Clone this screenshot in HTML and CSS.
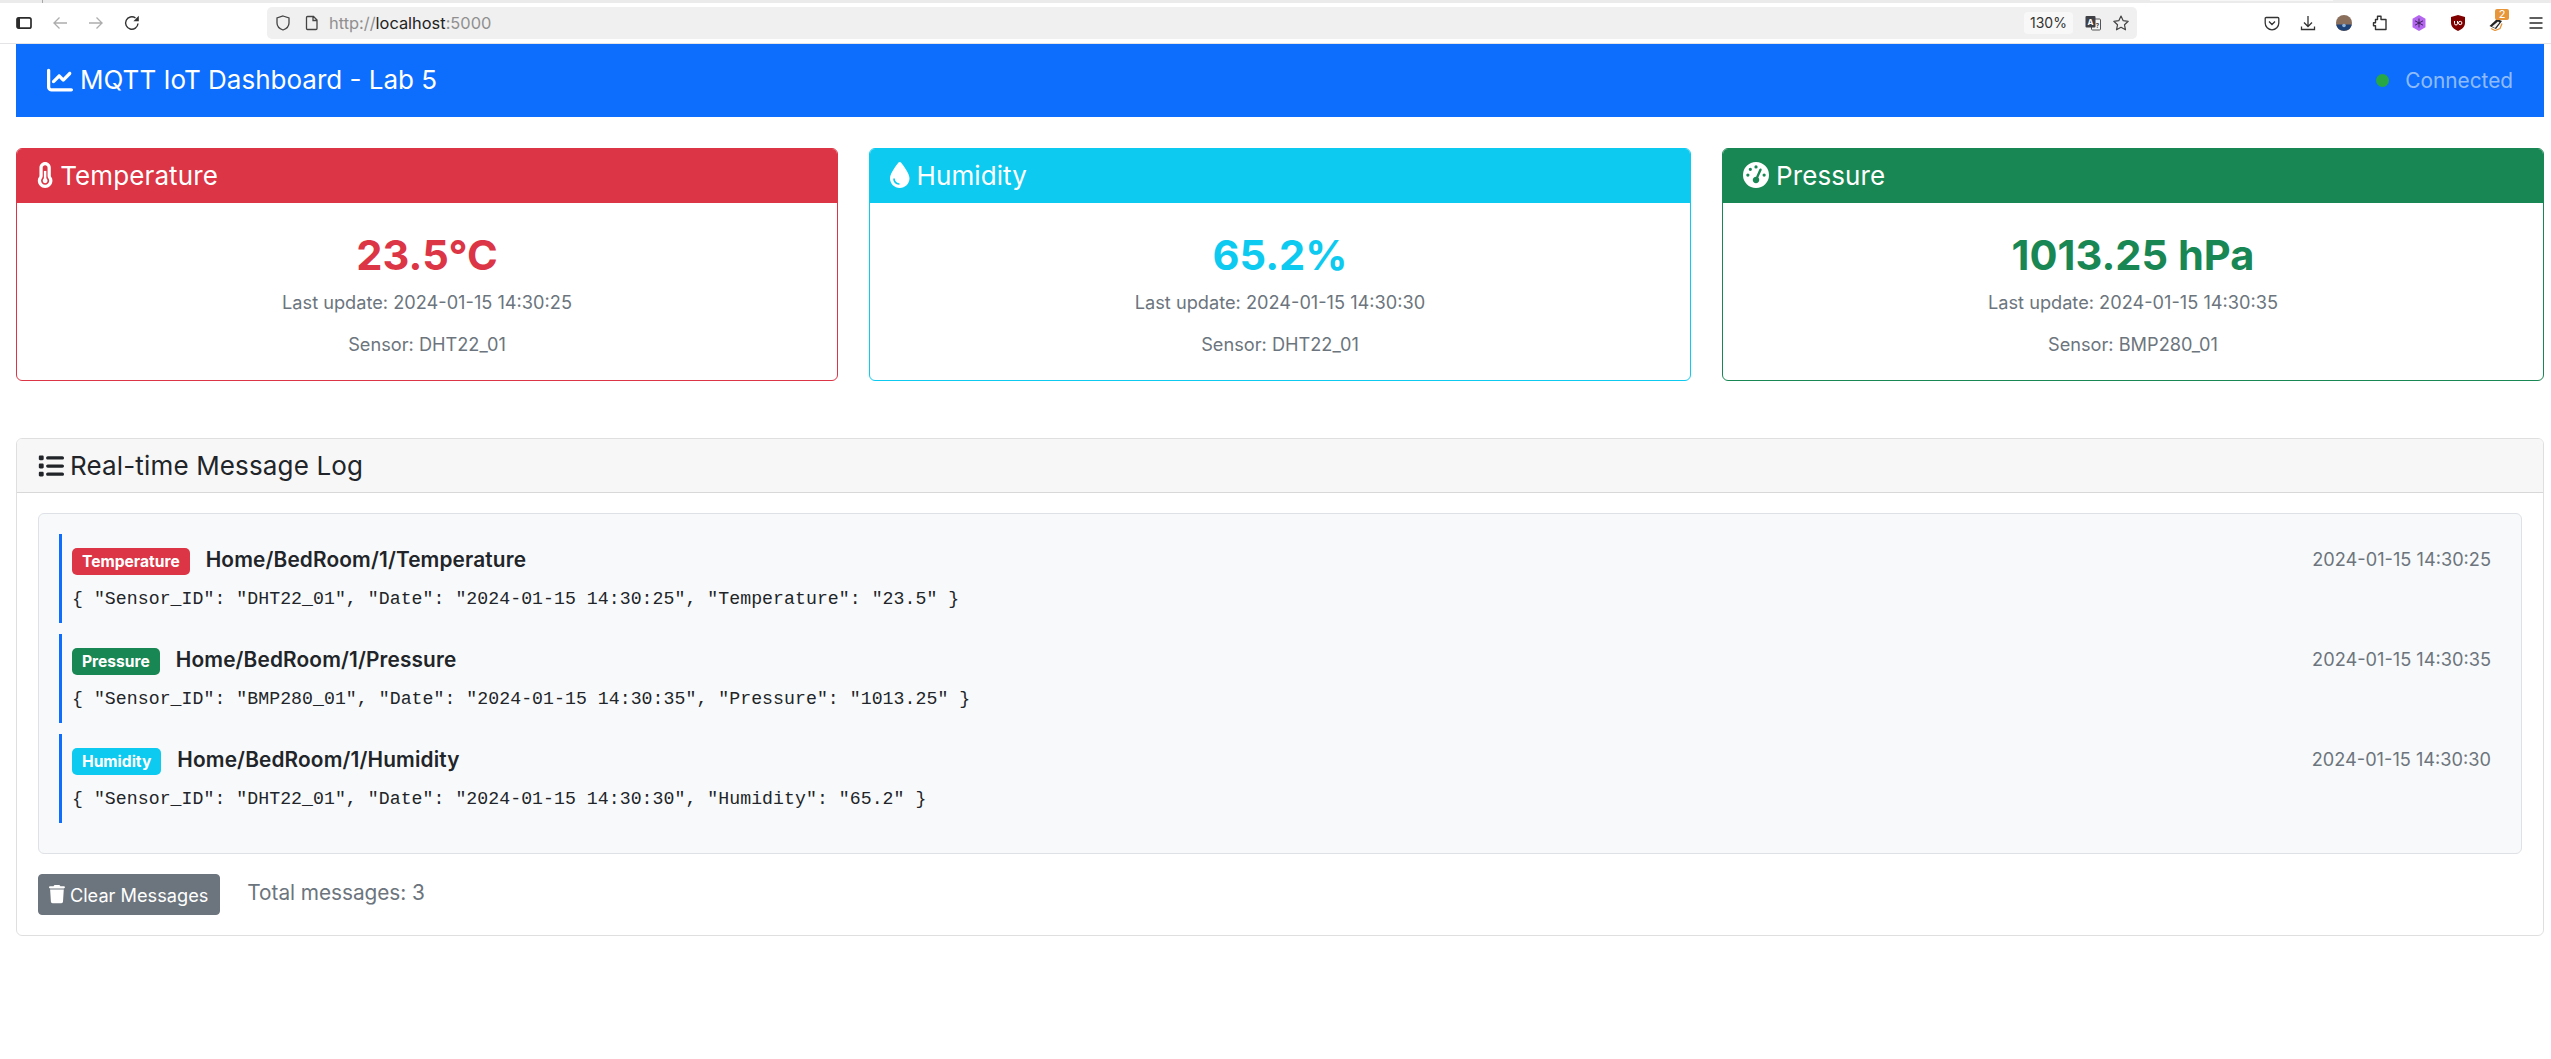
FILE: index.html
```html
<!DOCTYPE html>
<html lang="en">
<head>
<meta charset="UTF-8"/>
<title>MQTT IoT Dashboard</title>
<link rel="stylesheet" href="styles.css">
</head>
<body>
  <div class="tabstrip"><span class="tab-sep"></span><span class="tab-shadow"></span></div>
  <div class="toolbar">
    <div class="tb-left">
      <svg class="tb-icon" viewBox="0 0 16 16"><rect x="1" y="2.800" width="14" height="10.400" rx="1.800" fill="none" stroke="#2b2b2b" stroke-width="1.700"/><rect x="1" y="2.800" width="3" height="10.400" fill="#2b2b2b"/></svg>
      <svg class="tb-icon" viewBox="0 0 16 16"><path d="M15 8H1.500M7.500 2.500L2 8l5.500 5.500" fill="none" stroke="#adadad" stroke-width="1.300"/></svg>
      <svg class="tb-icon" viewBox="0 0 16 16"><path d="M1 8h13.500M8.500 2.500L14 8l-5.500 5.500" fill="none" stroke="#adadad" stroke-width="1.300"/></svg>
      <svg class="tb-icon" viewBox="0 0 16 16"><path d="M14 8.500A6.200 6.200 0 1 1 11.500 3" fill="none" stroke="#333" stroke-width="1.400"/><path d="M14.800 .8v5.400H9.400z" fill="#333"/></svg>
    </div>
    <div class="urlbar">
      <svg class="url-icon shield" viewBox="0 0 16 16"><path d="M8 1l6 2v5c0 3.500-2.700 5.800-6 7-3.300-1.200-6-3.500-6-7V3z" fill="none" stroke="#444" stroke-width="1.300"/></svg>
      <svg class="url-icon" viewBox="0 0 16 16"><path d="M3.500 1.500h6l3.500 3.500v8.500a1 1 0 0 1-1 1H3.500a1 1 0 0 1-1-1v-11a1 1 0 0 1 1-1zM9 1.500V5.500h4" fill="none" stroke="#444" stroke-width="1.300"/></svg>
      <span class="url-text">http://<b>localhost</b>:5000</span>
      <span class="url-zoom">130%</span>
      <svg class="url-icon" viewBox="0 0 16 16"><rect x="6.500" y="4" width="9" height="11" rx="1" fill="#f6f6f6" stroke="#555"/><rect x=".5" y="1" width="10" height="11.500" rx="1" fill="#3f3f46"/><text class="tr-a" x="5.500" y="9.500">A</text><text class="tr-q" x="12.500" y="12.500">?</text></svg>
      <svg class="url-icon" viewBox="0 0 16 16"><path d="M8 1l2.200 4.700 5 .6-3.700 3.500 1 5L8 12.300l-4.500 2.500 1-5L.8 6.300l5-.6z" fill="none" stroke="#444" stroke-width="1.200" stroke-linejoin="round"/></svg>
    </div>
    <div class="tb-right">
      <svg class="tb-icon" viewBox="0 0 16 16"><path d="M2.200 2.500h11.600a1 1 0 0 1 1 1V8a6.800 6.800 0 0 1-13.600 0V3.500a1 1 0 0 1 1-1zM5 6.500l3 3 3-3" fill="none" stroke="#333" stroke-width="1.300"/></svg>
      <svg class="tb-icon" viewBox="0 0 16 16"><path d="M8 1v10M4 7.500l4 4 4-4M1.500 11.500v3h13v-3" fill="none" stroke="#333" stroke-width="1.300"/></svg>
      <svg class="tb-icon" viewBox="0 0 16 16"><circle cx="8" cy="8" r="8" fill="#8a6f5c"/><path d="M.2 9.500h15.600A8 8 0 0 1 .2 9.500z" fill="#1d4378"/><circle cx="8" cy="10.500" r="1.800" fill="#8fb3d9"/></svg>
      <svg class="tb-icon" viewBox="0 0 16 16"><path d="M5.500 1.200h3.500v3.300h5v10H3.500v-3.800H1.500V7.800h2V4.500h2z" fill="none" stroke="#333" stroke-width="1.400" stroke-linejoin="round"/></svg>
      <svg class="tb-icon tb-wide" viewBox="0 0 16 16"><path d="M8 0l6.500 3.800v8.400L8 16l-6.500-3.800V3.800z" fill="#b566f0"/><path d="M8 3.500v9M4 5.800l8 4.400M12 5.800l-8 4.400" stroke="#3c2458" stroke-width="1"/></svg>
      <svg class="tb-icon tb-wide" viewBox="0 0 16 16"><path d="M8 0l7 2v6c0 3.500-3 6.500-7 8-4-1.500-7-4.500-7-8V2z" fill="#800000"/><path d="M4.500 6v2.500a1.500 1.500 0 0 0 3 0V6M8.500 8a1.700 1.700 0 1 0 3.400 0 1.700 1.700 0 1 0-3.400 0" fill="none" stroke="#fff" stroke-width="1"/></svg>
      <span class="ext-badge tb-wide">
        <svg class="tb-icon" viewBox="0 0 16 16"><path d="M.5 11L8 4l5 2-6 8z" fill="#222"/><path d="M3 11.500l6-5 1.500 1-4.500 5.500z" fill="#f2f2f2"/><path d="M2 13.500l4 2 5-2 2-5" fill="none" stroke="#e8963a" stroke-width="1.300"/></svg>
        <span class="ext-count">2</span>
      </span>
      <svg class="tb-icon tb-wide" viewBox="0 0 16 16"><path d="M1.500 3h13M1.500 8h13M1.500 13h13" stroke="#2b2b2b" stroke-width="1.400"/></svg>
    </div>
  </div>

  <div class="page">
    <nav class="navbar">
      <span class="brand">
        <svg class="ico" viewBox="0 0 512 512"><path d="M64 64c0-17.700-14.300-32-32-32S0 46.300 0 64V400c0 44.200 35.800 80 80 80H480c17.700 0 32-14.300 32-32s-14.300-32-32-32H80c-8.800 0-16-7.200-16-16V64zm406.600 86.600c12.500-12.500 12.500-32.800 0-45.300s-32.800-12.500-45.300 0L320 210.700l-57.400-57.400c-12.500-12.500-32.800-12.500-45.300 0l-112 112c-12.500 12.500-12.500 32.800 0 45.300s32.800 12.500 45.300 0L240 221.300l57.400 57.400c12.500 12.500 32.800 12.500 45.300 0l128-128z"/></svg>
        MQTT IoT Dashboard - Lab 5
      </span>
      <span class="status"><span class="dot"></span>Connected</span>
    </nav>

    <div class="sensors">
      <div class="card sensor temp">
        <div class="card-head">
          <svg class="ico" viewBox="0 0 320 512"><path fill-rule="evenodd" d="M160 0c-62 0-112 50-112 112v164c0 8-3 14-8 20-15 19-24 43-24 68 0 82 66 148 144 148s144-66 144-148c0-25-9-49-24-68-5-6-8-12-8-20V112C272 50 222 0 160 0zm0 64c27 0 48 21 48 48v165c0 17 7 32 15 42 11 14 17 31 17 49 0 44-36 80-80 80s-80-36-80-80c0-18 6-35 17-49 8-10 15-25 15-42V112c0-27 21-48 48-48z"/><circle cx="160" cy="368" r="48"/><rect x="136" y="176" width="48" height="180"/></svg>
          Temperature
        </div>
        <div class="card-body">
          <div class="value">23.5°C</div>
          <p class="meta">Last update: 2024-01-15 14:30:25</p>
          <p class="meta">Sensor: DHT22_01</p>
        </div>
      </div>
      <div class="card sensor hum">
        <div class="card-head">
          <svg class="ico" viewBox="0 0 384 512"><path d="M192 512C86 512 0 426 0 320C0 228.800 130.200 57.700 166.600 11.700C172.600 4.200 181.500 0 191.100 0h1.800c9.600 0 18.500 4.200 24.500 11.700C253.800 57.700 384 228.800 384 320c0 106-86 192-192 192zM96 336c0-8.800-7.200-16-16-16s-16 7.200-16 16c0 61.900 50.100 112 112 112c8.800 0 16-7.200 16-16s-7.200-16-16-16c-44.200 0-80-35.800-80-80z"/></svg>
          Humidity
        </div>
        <div class="card-body">
          <div class="value">65.2%</div>
          <p class="meta">Last update: 2024-01-15 14:30:30</p>
          <p class="meta">Sensor: DHT22_01</p>
        </div>
      </div>
      <div class="card sensor pres">
        <div class="card-head">
          <svg class="ico" viewBox="0 0 512 512"><path d="M0 256a256 256 0 1 1 512 0A256 256 0 1 1 0 256zM288 96a32 32 0 1 0 -64 0 32 32 0 1 0 64 0zM256 416c35.300 0 64-28.700 64-64c0-17.400-6.900-33.100-18.100-44.600L366 161.700c5.300-12.100-.2-26.300-12.300-31.600s-26.300 .2-31.600 12.300L257.900 288c-.6 0-1.300 0-1.900 0c-35.300 0-64 28.700-64 64s28.700 64 64 64zM176 144a32 32 0 1 0 -64 0 32 32 0 1 0 64 0zM96 288a32 32 0 1 0 0-64 32 32 0 1 0 0 64zm352-32a32 32 0 1 0 -64 0 32 32 0 1 0 64 0z"/></svg>
          Pressure
        </div>
        <div class="card-body">
          <div class="value">1013.25 hPa</div>
          <p class="meta">Last update: 2024-01-15 14:30:35</p>
          <p class="meta">Sensor: BMP280_01</p>
        </div>
      </div>
    </div>

    <div class="card log">
      <div class="log-head">
        <svg class="ico" viewBox="0 0 512 512"><path d="M40 48C26.700 48 16 58.700 16 72v48c0 13.300 10.700 24 24 24H88c13.300 0 24-10.700 24-24V72c0-13.300-10.700-24-24-24H40zM192 64c-17.700 0-32 14.300-32 32s14.300 32 32 32H480c17.700 0 32-14.300 32-32s-14.300-32-32-32H192zm0 160c-17.700 0-32 14.300-32 32s14.300 32 32 32H480c17.700 0 32-14.300 32-32s-14.300-32-32-32H192zm0 160c-17.700 0-32 14.300-32 32s14.300 32 32 32H480c17.700 0 32-14.300 32-32s-14.300-32-32-32H192zM16 232v48c0 13.300 10.700 24 24 24H88c13.300 0 24-10.700 24-24V232c0-13.300-10.700-24-24-24H40c-13.300 0-24 10.700-24 24zM40 368c-13.300 0-24 10.700-24 24v48c0 13.300 10.700 24 24 24H88c13.300 0 24-10.700 24-24V392c0-13.300-10.700-24-24-24H40z"/></svg>
        Real-time Message Log
      </div>
      <div class="log-body">
        <div class="messages">
          <div class="msg">
            <div class="msg-top">
              <div><span class="badge red">Temperature</span><strong class="topic">Home/BedRoom/1/Temperature</strong></div>
              <span class="time">2024-01-15 14:30:25</span>
            </div>
            <div class="payload">{ "Sensor_ID": "DHT22_01", "Date": "2024-01-15 14:30:25", "Temperature": "23.5" }</div>
          </div>
          <div class="msg">
            <div class="msg-top">
              <div><span class="badge green">Pressure</span><strong class="topic">Home/BedRoom/1/Pressure</strong></div>
              <span class="time">2024-01-15 14:30:35</span>
            </div>
            <div class="payload">{ "Sensor_ID": "BMP280_01", "Date": "2024-01-15 14:30:35", "Pressure": "1013.25" }</div>
          </div>
          <div class="msg">
            <div class="msg-top">
              <div><span class="badge cyan">Humidity</span><strong class="topic">Home/BedRoom/1/Humidity</strong></div>
              <span class="time">2024-01-15 14:30:30</span>
            </div>
            <div class="payload">{ "Sensor_ID": "DHT22_01", "Date": "2024-01-15 14:30:30", "Humidity": "65.2" }</div>
          </div>
        </div>
        <div class="log-foot">
          <button class="btn">
            <svg class="ico" viewBox="0 0 448 512"><path d="M135.200 17.700L128 32H32C14.300 32 0 46.300 0 64S14.300 96 32 96H416c17.700 0 32-14.300 32-32s-14.300-32-32-32H320l-7.200-14.300C307.400 6.800 296.300 0 284.200 0H163.800c-12.100 0-23.200 6.800-28.600 17.700zM416 128H32L53.200 467c1.600 25.300 22.600 45 47.900 45H346.900c25.300 0 46.300-19.700 47.900-45L416 128z"/></svg>
            Clear Messages
          </button>
          <span class="total">Total messages: 3</span>
        </div>
      </div>
    </div>
  </div>
</body>
</html>
```

FILE: styles.css
```css
body { margin: 0; background: #fff; color: #212529; font-family: Inter, "Liberation Sans", sans-serif; font-size: 20.8px; }

.tabstrip { height: 3px; display: flex; background: #ebebeb; }
.tab-sep { width: 1px; background: #a8a8a8; margin-left: 42px; }
.tab-shadow { width: 183px; height: 1px; background: #f7f7f7; margin-left: 2107px; }
.toolbar { height: 41px; box-sizing: border-box; display: flex; align-items: center; background: #fff; border-bottom: 1px solid #e4e4e6; padding: 0 7px 0 16px; }
.tb-left { display: flex; align-items: center; gap: 20px; width: 251px; }
.tb-right { display: flex; align-items: center; justify-content: flex-end; gap: 20px; flex: 1; }
.tb-icon { width: 16px; height: 16px; display: block; }
.tb-wide { margin-left: 3px; }
.urlbar { width: 1870px; height: 32px; display: flex; align-items: center; gap: 12px; background: #f0f0f0; border-radius: 5px; padding: 0 8px; box-sizing: border-box; }
.url-icon { width: 16px; height: 16px; flex: none; }
.shield { margin-right: 1px; }
.url-text { flex: 1; font-size: 16.400px; color: #8f8f8f; margin-left: -3px; }
.url-text b { font-weight: 400; color: #222; }
.url-zoom { font-size: 14px; color: #333; background: #f8f8f8; border-radius: 4px; height: 22px; line-height: 22px; width: 49px; text-align: center; }
.tr-a { font-size: 8px; font-weight: 700; fill: #fff; text-anchor: middle; }
.tr-q { font-size: 6px; font-weight: 700; fill: #444; text-anchor: middle; }
.ext-badge { position: relative; }
.ext-count { position: absolute; top: -6px; right: -4px; width: 14px; height: 11px; background: #e8963a; color: #fff; font-size: 11px; line-height: 11px; text-align: center; border-radius: 2px; }

.page { padding: 0 7px 0 16px; }
.navbar { height: 73px; display: flex; align-items: center; justify-content: space-between; background: #0d6efd; padding: 0 31px; color: #fff; }
.brand { font-size: 26px; display: flex; align-items: center; gap: 7px; margin-bottom: 2px; }
.status { display: flex; align-items: center; color: rgba(255,255,255,.55); font-size: 20.800px; }
.dot { width: 13px; height: 13px; border-radius: 50%; background: #28a745; margin-right: 16px; }
.ico { height: 1em; width: auto; fill: currentColor; flex: none; }

.sensors { display: grid; grid-template-columns: repeat(3, 1fr); gap: 31px; margin-top: 31px; }
.card { border: 1px solid rgba(0,0,0,.125); border-radius: 6px; box-sizing: border-box; }
.sensor { height: 233px; }
.card-head { display: flex; align-items: center; gap: 7px; height: 54px; padding: 0 20px 2px; box-sizing: border-box; font-size: 26px; letter-spacing: .1px; color: #fff; border-radius: 5px 5px 0 0; }
.card-body { text-align: center; padding: 27px 20px 0; }
.value { font-size: 41.600px; font-weight: 700; line-height: 50px; margin-bottom: 10px; }
.meta { margin: 0 0 17px; font-size: 18.200px; line-height: 25px; color: #6c757d; }

.temp { border-color: #dc3545; }
.temp .card-head { background: #dc3545; }
.temp .value { color: #dc3545; }
.hum { border-color: #0dcaf0; }
.hum .card-head { background: #0dcaf0; }
.hum .value { color: #0dcaf0; }
.pres { border-color: #198754; }
.pres .card-head { background: #198754; }
.pres .value { color: #198754; }

.log { margin-top: 57px; }
.log-head { display: flex; align-items: center; gap: 6px; height: 54px; box-sizing: border-box; padding: 0 21px; font-size: 26px; letter-spacing: .15px; background: #f7f7f7; border-bottom: 1px solid rgba(0,0,0,.125); border-radius: 5px 5px 0 0; }
.log-body { padding: 20px 21px 20px; }
.messages { background: #f8f9fa; border: 1px solid #dee2e6; border-radius: 6px; padding: 20px; height: 341px; box-sizing: border-box; }
.msg { border-left: 3px solid #0d6efd; padding: 13px 0 0 10px; margin-bottom: 11px; height: 89px; box-sizing: border-box; }
.msg-top { display: flex; justify-content: space-between; align-items: flex-start; }
.badge { display: inline-block; color: #fff; font-size: 15.600px; font-weight: 700; padding: 5px 10px 4px; line-height: 18px; border-radius: 5px; margin-right: 16px; }
.red { background: #dc3545; }
.green { background: #198754; }
.cyan { background: #0dcaf0; }
.topic { font-size: 20.800px; font-weight: 600; letter-spacing: .15px; }
.time { font-size: 18.200px; color: #6c757d; margin-right: 10px; margin-top: 1px; }
.payload { margin-top: 12px; font-family: "Liberation Mono", monospace; font-size: 18.200px; letter-spacing: .04px; line-height: 24px; }
.log-foot { display: flex; align-items: center; gap: 27px; margin-top: 20px; }
.btn { display: flex; align-items: center; gap: 5px; height: 41px; padding: 0 11px 0 10px; font-family: inherit; font-size: 18.200px; color: #fff; background: #6c757d; border: 1px solid #6c757d; border-radius: 4px; }
.total { color: #6c757d; margin-bottom: 4px; letter-spacing: -.05px; }
```
